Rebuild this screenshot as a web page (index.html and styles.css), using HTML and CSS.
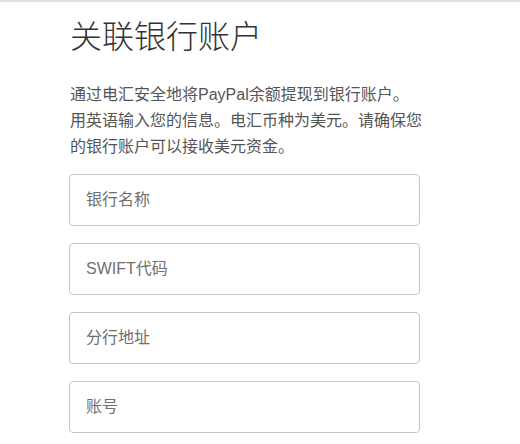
FILE: index.html
```html
<!DOCTYPE html>
<html lang="zh-CN">
<head>
<meta charset="utf-8">
<title>关联银行账户</title>
<link rel="stylesheet" href="styles.css">
</head>
<body>
<div class="topline"></div>
<main class="page">
  <h1 class="title">关联银行账户</h1>
  <p class="desc">通过电汇安全地将PayPal余额提现到银行账户。用英语输入您的信息。电汇币种为美元。请确保您的银行账户可以接收美元资金。</p>
  <form class="form">
    <input class="field" type="text" placeholder="银行名称">
    <input class="field" type="text" placeholder="SWIFT代码">
    <input class="field" type="text" placeholder="分行地址">
    <input class="field" type="text" placeholder="账号">
  </form>
</main>
</body>
</html>
```

FILE: styles.css
```css
html, body {
  margin: 0;
  padding: 0;
  background: #fff;
}
body {
  font-family: "Liberation Sans", "Noto Sans CJK SC", sans-serif;
  color: #333;
}
.topline {
  height: 2px;
  background: #e2e2e2;
}
.page {
  padding: 0 0 0 69px;
  width: 353px;
}
.title {
  margin: 15px 0 0 1px;
  font-size: 32px;
  line-height: 40px;
  font-weight: 300;
  color: #333;
}
.desc {
  margin: 25px 0 0 1px;
  font-size: 16px;
  line-height: 26px;
  color: #555;
}
.form {
  margin-top: 14px;
  display: flex;
  flex-direction: column;
  gap: 17px;
}
.field {
  box-sizing: border-box;
  width: 351px;
  height: 52px;
  border: 1px solid #c6c6c6;
  border-radius: 4px;
  padding: 0 16px;
  font-family: "Liberation Sans", "Noto Sans CJK SC", sans-serif;
  font-size: 16px;
  color: #333;
  background: #fff;
  outline: none;
}
.field::placeholder {
  color: #6f6f6f;
  opacity: 1;
}
```
